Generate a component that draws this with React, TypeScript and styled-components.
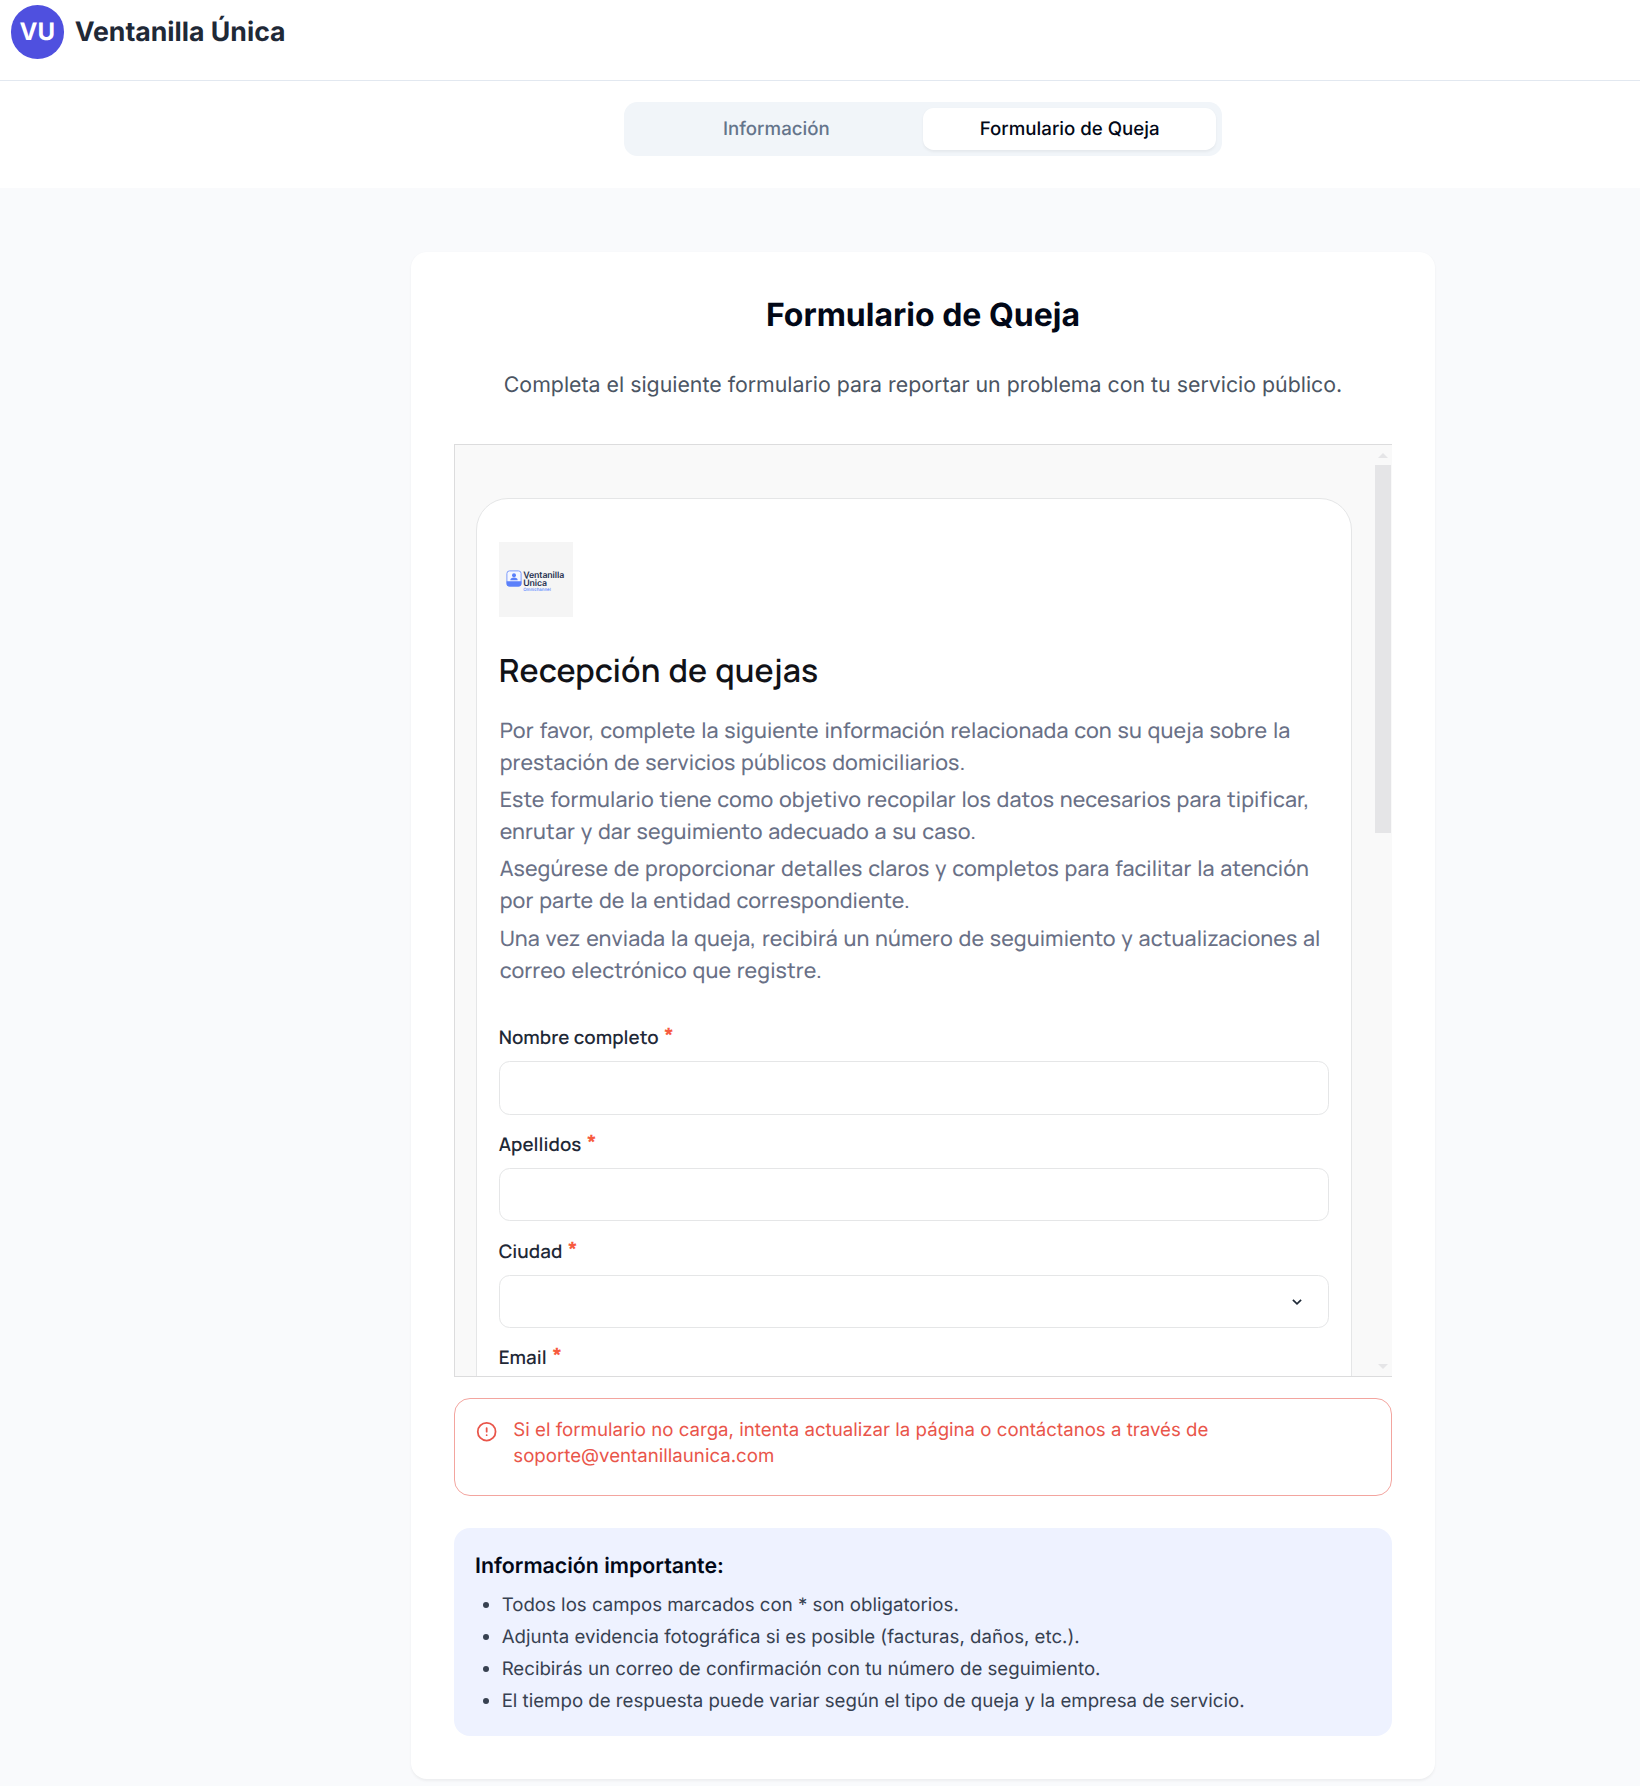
import React from "react";
import styled, { createGlobalStyle } from "styled-components";

const GlobalStyle = createGlobalStyle`
  *, *::before, *::after { box-sizing: border-box; }
  body {
    margin: 0;
    background: #f9fafc;
    font-family: Inter, "Liberation Sans", sans-serif;
    color: #020817;
    text-rendering: geometricPrecision;
  }
  h1, h2, h3, p, ul { margin: 0; padding: 0; }
`;

const Page = styled.div`
  height: 1786px;
  overflow: hidden;
  background: #f9fafc;
`;

const Header = styled.header`
  display: flex;
  align-items: flex-start;
  gap: 10.67px;
  height: 81px;
  padding: 5.33px 10.67px;
  background: #fff;
  border-bottom: 1px solid #e2e8f0;
`;

const Avatar = styled.div`
  display: flex;
  align-items: center;
  justify-content: center;
  width: 53.33px;
  height: 53.33px;
  border-radius: 50%;
  background: #4f50df;
  color: #fff;
  font-size: 24px;
  font-weight: 700;
`;

const Brand = styled.h1`
  padding-top: 1px;
  font-size: 26.67px;
  line-height: 53.33px;
  font-weight: 700;
  color: #1f2937;
`;

/* The content column is centred right of the window's middle. */
const Nav = styled.nav`
  display: flex;
  justify-content: center;
  padding: 21.33px 0 32px 206px;
  background: #fff;
`;

const TabList = styled.div`
  display: grid;
  grid-template-columns: 1fr 1fr;
  width: 597.33px;
  height: 53.33px;
  padding: 5.33px;
  border-radius: 13.33px;
  background: #f1f5f9;
`;

const Tab = styled.button<{ $active?: boolean }>`
  border: 0;
  padding: 0;
  border-radius: 10.67px;
  font-family: inherit;
  font-size: 18.67px;
  font-weight: 500;
  text-rendering: inherit;
  color: ${(p) => (p.$active ? "#020817" : "#64748b")};
  background: ${(p) => (p.$active ? "#fff" : "transparent")};
  box-shadow: ${(p) => (p.$active ? "0 1.33px 2.67px rgba(0,0,0,0.05)" : "none")};
`;

const Content = styled.main`
  display: flex;
  justify-content: center;
  padding: 64px 0 0 206px;
`;

const Card = styled.section`
  width: 1024px;
  height: 1527.5px;
  padding: 42.67px;
  border-radius: 16px;
  background: #fff;
  box-shadow: 0 1.33px 2.67px rgba(0, 0, 0, 0.05);
`;

const Title = styled.h2`
  font-size: 32px;
  line-height: 42.67px;
  font-weight: 700;
  text-align: center;
  margin-bottom: 32px;
`;

const Subtitle = styled.p`
  font-size: 21.33px;
  line-height: 32px;
  text-align: center;
  color: #4b5563;
  margin-bottom: 42.67px;
`;

const Frame = styled.section`
  display: flex;
  width: 938px;
  height: 933px;
  padding-left: 21px;
  overflow: hidden;
  border: 1px solid #dcdcdd;
  border-right: 0;
  background: #f9f9f9;
`;

const Sheet = styled.form`
  flex: none;
  width: 876px;
  height: 1100px;
  margin-top: 53px;
  padding: 43px 22px 0;
  border: 1px solid #e5e6e7;
  border-radius: 32px;
  background: #fff;
  font-family: Manrope, Inter, sans-serif;
`;

const ScrollTrack = styled.div`
  display: flex;
  flex-direction: column;
  width: 16px;
  margin-left: 23px;
  height: 931px;
`;

const ScrollThumb = styled.div`
  height: 368px;
  background: #e5e5e7;
`;

const Arrow = styled.svg`
  display: block;
  width: 16px;
  height: 20px;
`;

const Spacer = styled.div`
  flex: 1;
`;

const LogoTile = styled.div`
  display: flex;
  width: 74px;
  height: 75px;
  padding: 28px 0 0 7px;
  gap: 1.5px;
  background: #f5f5f5;
`;

const LogoText = styled.div`
  font-family: Inter, sans-serif;
  font-size: 8.8px;
  line-height: 8px;
  font-weight: 600;
  letter-spacing: -0.1px;
  color: #273250;
  padding-top: 2px;
`;

const LogoSub = styled.div`
  font-size: 4.4px;
  line-height: 5px;
  font-weight: 500;
  letter-spacing: 0;
  color: #5b86ff;
`;

const FormTitle = styled.h2`
  margin-top: 32px;
  font-size: 32px;
  line-height: 43px;
  font-weight: 600;
  color: #111217;
  white-space: nowrap;
  letter-spacing: 0.08px;
  word-spacing: 1.6px;
`;

const Intro = styled.div`
  display: flex;
  flex-direction: column;
  gap: 5.33px;
  margin: 23px -10px 0 1px;
  font-size: 21.33px;
  line-height: 32px;
  font-weight: 500;
  letter-spacing: 0.09px;
  word-spacing: 1.3px;
  color: #697086;
`;

const Fields = styled.div`
  display: flex;
  flex-direction: column;
  margin-top: 37.67px;
`;

const Field = styled.div`
  height: 106.67px;
`;

const Label = styled.label`
  display: flex;
  gap: 5.5px;
  height: 37px;
  font-size: 18.67px;
  line-height: 26.2px;
  font-weight: 600;
  letter-spacing: 0.05px;
  word-spacing: 0.6px;
  color: #1f2937;
`;

const Star = styled.span`
  font-size: 21.33px;
  line-height: 24px;
  font-weight: 700;
  color: #f75b3f;
`;

const Control = styled.div`
  display: flex;
  align-items: center;
  justify-content: flex-end;
  width: 830px;
  height: 53.33px;
  padding: 2px 26px 0 0;
  border: 1px solid #e5e6e7;
  border-radius: 10.67px;
`;

const Alert = styled.div`
  display: flex;
  gap: 16px;
  height: 98px;
  margin-top: 21.33px;
  padding: 22px 21.33px 0;
  border: 1px solid #f3a59f;
  border-radius: 16px;
  color: #e9554a;
`;

const AlertText = styled.p`
  margin-top: -4px;
  font-size: 18.67px;
  line-height: 26px;
`;

const Notice = styled.aside`
  height: 208px;
  margin-top: 32px;
  padding: 22.33px 21.33px;
  border-radius: 16px;
  background: #eef2ff;
`;

const NoticeTitle = styled.h3`
  font-size: 21.33px;
  line-height: 32px;
  font-weight: 600;
  margin-bottom: 9.67px;
`;

const NoticeList = styled.ul`
  display: flex;
  flex-direction: column;
  gap: 5.33px;
  && { padding-left: 26.67px; }
  list-style: disc;
  font-size: 18.67px;
  line-height: 26.67px;
  color: #374151;
`;

const intro = [
  "Por favor, complete la siguiente información relacionada con su queja sobre la prestación de servicios públicos domiciliarios.",
  "Este formulario tiene como objetivo recopilar los datos necesarios para tipificar, enrutar y dar seguimiento adecuado a su caso.",
  "Asegúrese de proporcionar detalles claros y completos para facilitar la atención por parte de la entidad correspondiente.",
  "Una vez enviada la queja, recibirá un número de seguimiento y actualizaciones al correo electrónico que registre.",
];

const fields: { label: string; select?: boolean }[] = [
  { label: "Nombre completo" },
  { label: "Apellidos" },
  { label: "Ciudad", select: true },
  { label: "Email" },
];

const notes = [
  "Todos los campos marcados con * son obligatorios.",
  "Adjunta evidencia fotográfica si es posible (facturas, daños, etc.).",
  "Recibirás un correo de confirmación con tu número de seguimiento.",
  "El tiempo de respuesta puede variar según el tipo de queja y la empresa de servicio.",
];

function LogoMark() {
  return (
    <svg width="16" height="17" viewBox="0 0 16 17">
      <rect x="0.9" y="0.9" width="14.2" height="15.2" rx="2.6" fill="#f5f7ff" stroke="#7d9bfb" strokeWidth="1" />
      <path d="M0.6 11.2h14.8v2.6a2.6 2.6 0 0 1-2.6 2.6H3.2a2.6 2.6 0 0 1-2.6-2.6z" fill="#5b80fa" />
      <circle cx="8" cy="5.3" r="2" fill="#5b80fa" />
      <path d="M4.3 10.3c0-1.9 1.5-2.7 3.7-2.7s3.7.8 3.7 2.7z" fill="#5b80fa" />
    </svg>
  );
}

function Chevron() {
  return (
    <svg width="10" height="8" viewBox="0 0 10 8" fill="none" stroke="#1f2937" strokeWidth="1.7">
      <path d="M0.9 1.8 5 5.8l4.1-4" />
    </svg>
  );
}

function AlertIcon() {
  return (
    <svg width="21.33" height="21.33" viewBox="0 0 24 24" fill="none" stroke="currentColor" strokeWidth="2" strokeLinecap="round" strokeLinejoin="round">
      <circle cx="12" cy="12" r="10" />
      <path d="M12 8v4M12 16h.01" />
    </svg>
  );
}

export default function App() {
  return (
    <>
      <GlobalStyle />
      <Page>
        <Header>
          <Avatar>VU</Avatar>
          <Brand>Ventanilla Única</Brand>
        </Header>
        <Nav>
          <TabList>
            <Tab>Información</Tab>
            <Tab $active>Formulario de Queja</Tab>
          </TabList>
        </Nav>
        <Content>
          <Card>
            <Title>Formulario de Queja</Title>
            <Subtitle>Completa el siguiente formulario para reportar un problema con tu servicio público.</Subtitle>
            <Frame>
              <Sheet>
                <LogoTile>
                  <LogoMark />
                  <LogoText>
                    Ventanilla
                    <br />
                    Única
                    <LogoSub>Omnichannel</LogoSub>
                  </LogoText>
                </LogoTile>
                <FormTitle>Recepción de quejas</FormTitle>
                <Intro>
                  {intro.map((text) => (
                    <p key={text}>{text}</p>
                  ))}
                </Intro>
                <Fields>
                  {fields.map((f) => (
                    <Field key={f.label}>
                      <Label>
                        {f.label}
                        <Star>*</Star>
                      </Label>
                      <Control>{f.select && <Chevron />}</Control>
                    </Field>
                  ))}
                </Fields>
              </Sheet>
              <ScrollTrack>
                <Arrow viewBox="0 0 16 20">
                  <path d="M3 13 8 8l5 5z" fill="#e5e5e7" />
                </Arrow>
                <ScrollThumb />
                <Spacer />
                <Arrow viewBox="0 0 16 20">
                  <path d="M3 8h10l-5 5z" fill="#e5e5e7" />
                </Arrow>
              </ScrollTrack>
            </Frame>
            <Alert>
              <AlertIcon />
              <AlertText>
                Si el formulario no carga, intenta actualizar la página o contáctanos a través de
                <br />
                soporte@ventanillaunica.com
              </AlertText>
            </Alert>
            <Notice>
              <NoticeTitle>Información importante:</NoticeTitle>
              <NoticeList>
                {notes.map((n) => (
                  <li key={n}>{n}</li>
                ))}
              </NoticeList>
            </Notice>
          </Card>
        </Content>
      </Page>
    </>
  );
}
